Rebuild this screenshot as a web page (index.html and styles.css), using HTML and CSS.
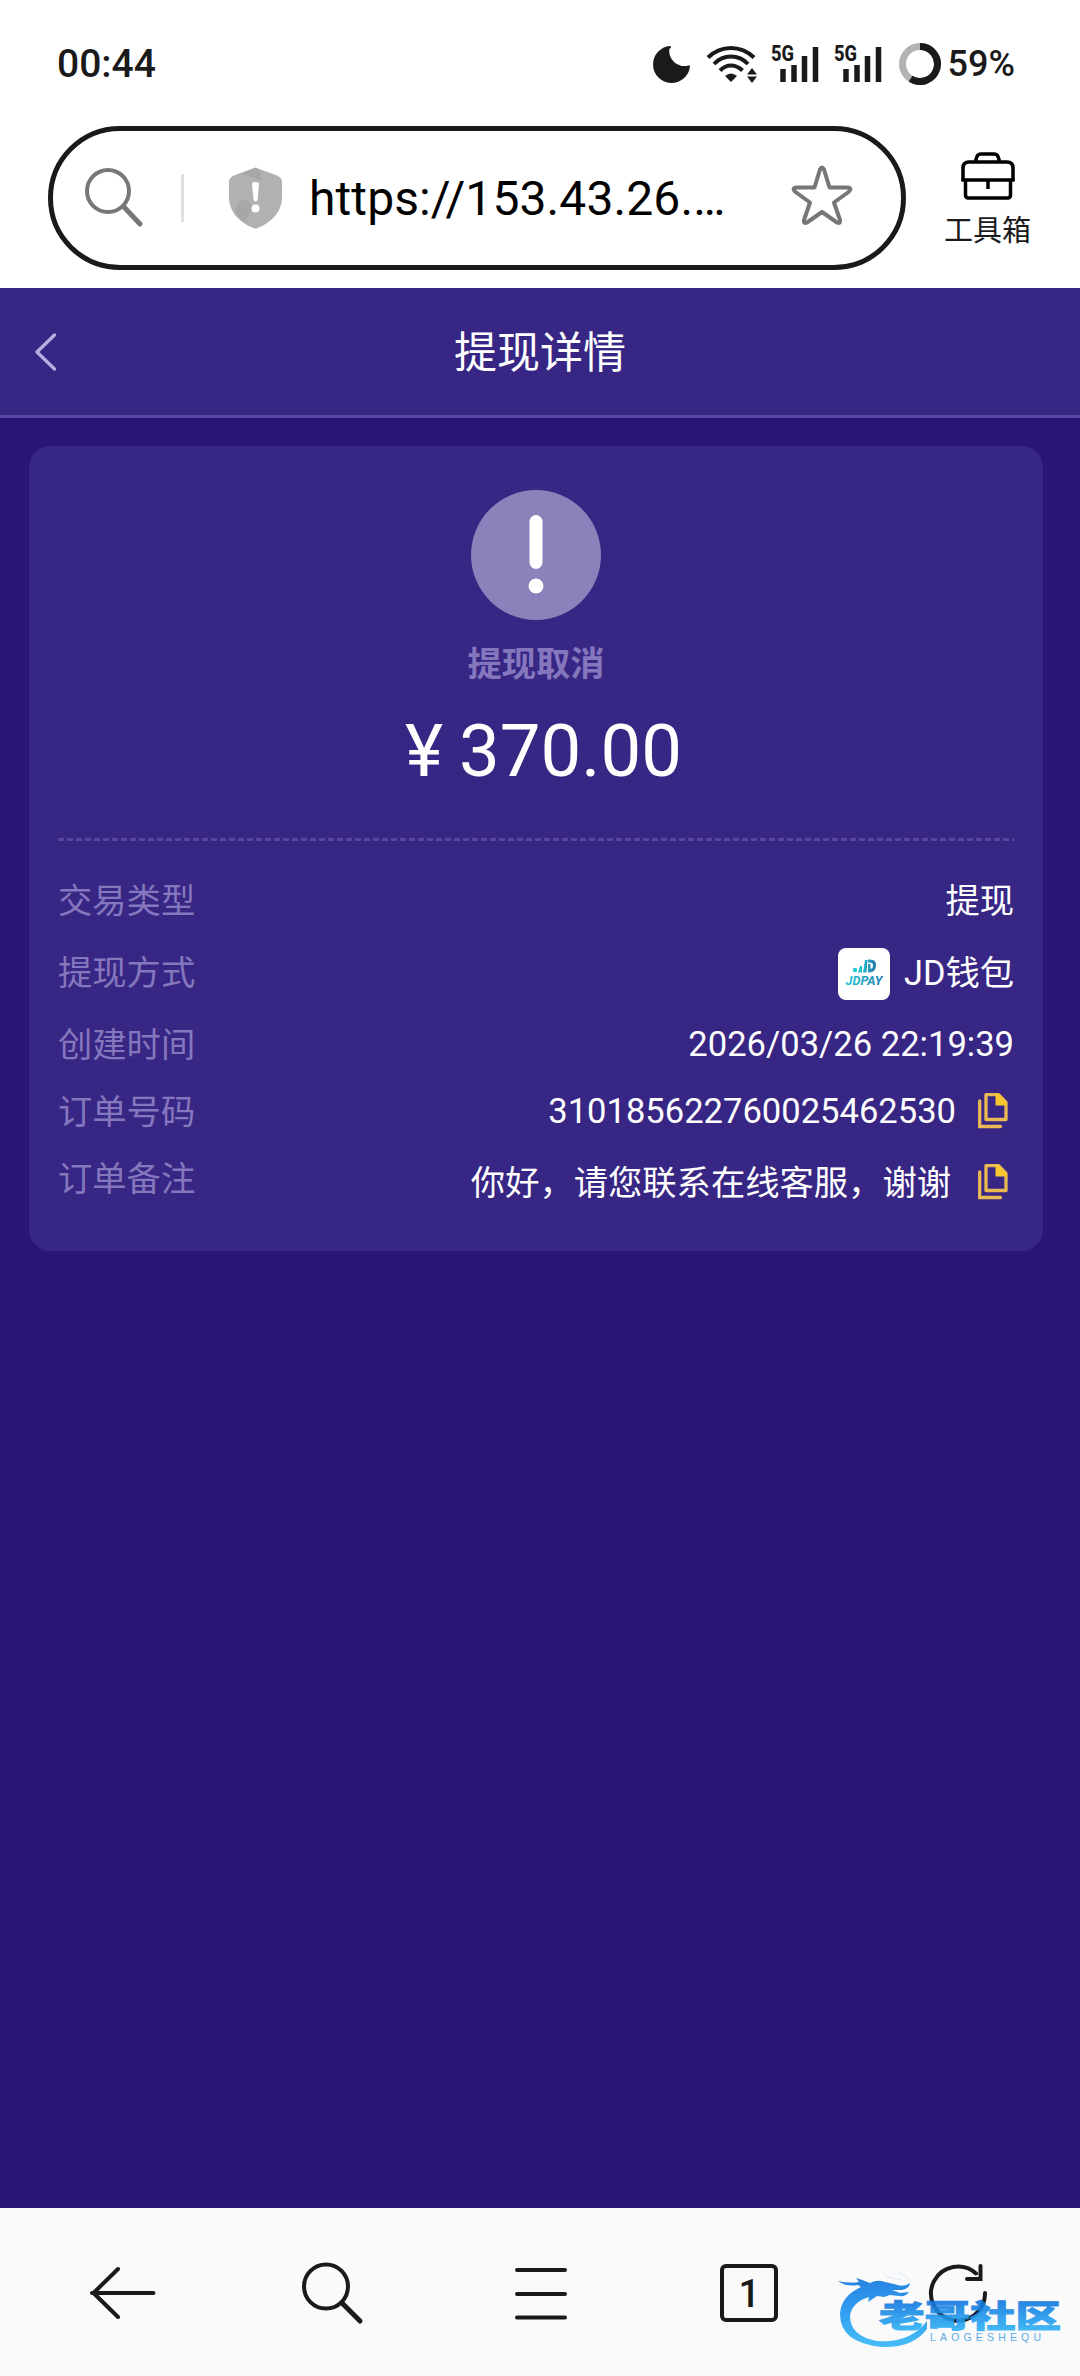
FILE: index.html
```html
<!DOCTYPE html>
<html lang="zh-CN">
<head>
    <meta charset="UTF-8">
    <meta name="viewport" content="width=device-width, initial-scale=1.0">
    <title>提现详情</title>
    <link rel="stylesheet" href="styles.css">
</head>
<body>
<div class="status-bar">
    <div class="clock">00:44</div>
    <div class="status-icons">
        <svg class="moon" width="38" height="38" viewBox="0 0 38 38">
            <path d="M17 1 A18.5 18.5 0 1 0 37 21 A1 1 0 0 0 35.500 20.500 A15 15 0 0 1 16.500 3.500 A1.200 1.200 0 0 0 17 1Z" fill="#1a1a1a"/>
        </svg>
        <svg class="wifi" width="52" height="38" viewBox="0 0 52 38">
            <g fill="none" stroke="#1a1a1a" stroke-width="4">
                <path d="M2 12.500 Q12 3 25 3 Q38 3 48 12.500"/>
                <path d="M8 19 Q15 11.500 25 11.500 Q35 11.500 42 19"/>
                <path d="M14 25.500 Q19 20.500 25 20.500 Q31 20.500 36.500 25.500"/>
            </g>
            <path d="M19 31 Q25 26 31 31 L25 37Z" fill="#1a1a1a"/>
            <path d="M41 29.500 L46 23 L51 29.500Z M41 31.500 L46 38 L51 31.500Z" fill="#1a1a1a"/>
        </svg>
        <svg class="signal" width="50" height="56" viewBox="0 -8 50 56">
            <text class="net-type" x="1" y="17" textLength="23" lengthAdjust="spacingAndGlyphs">5G</text>
            <path d="M13 25V38M24 21V38M34.500 12V38M45.500 3V38" stroke="#1a1a1a" stroke-width="5.500"/>
        </svg>
        <svg class="signal" width="50" height="56" viewBox="0 -8 50 56">
            <text class="net-type" x="1" y="17" textLength="23" lengthAdjust="spacingAndGlyphs">5G</text>
            <path d="M13 25V38M24 21V38M34.500 12V38M45.500 3V38" stroke="#1a1a1a" stroke-width="5.500"/>
        </svg>
        <svg class="battery" width="42" height="42" viewBox="0 0 42 42">
            <circle cx="21" cy="21" r="17.500" fill="none" stroke="#b2b2b2" stroke-width="7"/>
            <path d="M21 3.500 A17.500 17.500 0 1 1 11.600 35.800" fill="none" stroke="#1a1a1a" stroke-width="7"/>
        </svg>
        <span class="battery-text">59%</span>
    </div>
</div>

<div class="browser-bar">
    <div class="address">
        <svg class="search-icon" width="60" height="62" viewBox="0 0 60 62">
            <circle cx="24" cy="24" r="21" fill="none" stroke="#777" stroke-width="4"/>
            <path d="M39.500 39.500 L56 57" stroke="#777" stroke-width="5" stroke-linecap="round"/>
        </svg>
        <div class="divider"></div>
        <svg class="shield" width="55" height="62" viewBox="0 0 55 62">
            <path d="M27.500 0.500 L49 8.500 Q54 10.500 54 15 V30 C54 46 42 56 29.500 61 Q27.500 62 25.500 61 C13 56 1 46 1 30 V15 Q1 10.500 6 8.500Z" fill="#b1b1b1"/>
            <path d="M27.500 1 L11 7 Q22 8 33 14 Q34 5 27.500 1Z" fill="#a7a7a7"/>
            <path d="M7 44 Q8 34 18 32 Q21 34 24 40 L17 55 Q10 50 7 44Z" fill="#a7a7a7"/>
            <path d="M24 17 Q24 15 27.500 15 Q31 15 31 17 L29.500 33 Q27.500 36 25.500 33Z" fill="#fff"/>
            <circle cx="27.500" cy="41.500" r="4" fill="#fff"/>
        </svg>
        <div class="url">https://153.43.26.…</div>
        <svg class="star" width="62" height="60" viewBox="0 0 62 60">
            <path d="M29 4.500 Q31 0.500 33 4.500 L38.500 22.500 H57 Q61.500 23.500 57.500 27 L43 37.500 L49 55 Q49.500 59 46 57.500 L31 47 L16 57.500 Q12.500 59 13 55 L19 37.500 L4.500 27 Q0.500 23.500 5 22.500 H23.500Z" fill="none" stroke="#777" stroke-width="4" stroke-linejoin="round"/>
        </svg>
    </div>
    <div class="toolbox">
        <svg width="54" height="48" viewBox="0 0 54 48" fill="none" stroke="#000" stroke-width="3.500">
            <path d="M14.500 9 L16 4.500 Q17 2 20 2 H33 Q36 2 37 4.500 L38.500 9"/>
            <path d="M2 29 V16 Q2 10 8 10 H46 Q52 10 52 16 V29"/>
            <path d="M0.500 28 H53.500 M27 28 V37"/>
            <path d="M4.500 29 V43 Q4.500 46 7.500 46 H46.500 Q49.500 46 49.500 43 V29"/>
        </svg>
        <span>工具箱</span>
    </div>
</div>

<div class="page">
    <div class="page-header">
        <svg class="back" width="24" height="38" viewBox="0 0 24 38">
            <path d="M20.500 2 L3 19 L20.500 36" fill="none" stroke="#b9aee4" stroke-width="3.300" stroke-linecap="round" stroke-linejoin="round"/>
        </svg>
        <div class="title">提现详情</div>
    </div>

    <div class="card">
        <div class="result">
            <svg width="130" height="130" viewBox="0 0 130 130">
                <circle cx="65" cy="65" r="65" fill="#8c81ba"/>
                <rect x="58.500" y="25" width="13" height="54" rx="6.500" fill="#fff"/>
                <circle cx="65" cy="96" r="7.500" fill="#fff"/>
            </svg>
            <div class="result-text">提现取消</div>
            <div class="amount">¥ 370.00</div>
        </div>
        <div class="dashed"></div>
        <div class="row">
            <div class="label">交易类型</div>
            <div class="value"><span class="cn">提现</span></div>
        </div>
        <div class="row">
            <div class="label">提现方式</div>
            <div class="value">
                <svg class="jdpay" width="52" height="52" viewBox="0 0 52 52">
                    <defs>
                        <linearGradient id="jd" x1="0" y1="0" x2="1" y2="0">
                            <stop offset="0" stop-color="#25c8d4"/>
                            <stop offset="1" stop-color="#2679ae"/>
                        </linearGradient>
                    </defs>
                    <rect width="52" height="52" rx="8" fill="#fff"/>
                    <circle cx="17" cy="22" r="2.200" fill="#25c8d4"/>
                    <path d="M20 24.500 L22 18 H24 V24.500Z M25 24.500 L27 12 H29.500 L28.500 24.500Z M30 24.500 V16 H32.500 V21 Q35 20.500 35 17.500 Q35 14.500 31.500 14.500 H30 V11.500 H32 Q38.500 11.500 38 17.500 Q37.500 24.500 31 24.500Z" fill="url(#jd)"/>
                    <text class="jdpay-text" x="7.500" y="37" textLength="37" lengthAdjust="spacingAndGlyphs" fill="url(#jd)">JDPAY</text>
                </svg>
                <span class="cn">JD钱包</span>
            </div>
        </div>
        <div class="row">
            <div class="label">创建时间</div>
            <div class="value number">2026/03/26 22:19:39</div>
        </div>
        <div class="row row-short">
            <div class="label">订单号码</div>
            <div class="value number">
                <span>310185622760025462530</span>
                <svg class="copy" width="30" height="36" viewBox="0 0 30 36">
                    <path d="M1.700 8 V33.500 H22.500" fill="none" stroke="#e9b954" stroke-width="3.300" stroke-linecap="round"/>
                    <path d="M8 1.700 H20.500 L28 9.500 V26.500 H8Z" fill="none" stroke="#e9b954" stroke-width="3.300" stroke-linejoin="round"/>
                    <path d="M17.500 1 H21 L29 9.500 V12.500 H17.500Z" fill="#f8c630"/>
                </svg>
            </div>
        </div>
        <div class="row">
            <div class="label">订单备注</div>
            <div class="value remark">
                <span class="cn">你好，请您联系在线客服，谢谢</span>
                <svg class="copy" width="30" height="36" viewBox="0 0 30 36">
                    <path d="M1.700 8 V33.500 H22.500" fill="none" stroke="#e9b954" stroke-width="3.300" stroke-linecap="round"/>
                    <path d="M8 1.700 H20.500 L28 9.500 V26.500 H8Z" fill="none" stroke="#e9b954" stroke-width="3.300" stroke-linejoin="round"/>
                    <path d="M17.500 1 H21 L29 9.500 V12.500 H17.500Z" fill="#f8c630"/>
                </svg>
            </div>
        </div>
    </div>
</div>

<div class="nav">
    <svg width="70" height="70" viewBox="0 0 70 70" fill="none" stroke="#1a1a1a" stroke-width="4" stroke-linecap="round" stroke-linejoin="round">
        <path d="M65.500 35 H4 M30 11 L5.500 35 L30 59"/>
    </svg>
    <svg width="70" height="70" viewBox="0 0 70 70" fill="none" stroke="#1a1a1a" stroke-linecap="round">
        <circle cx="29" cy="28.500" r="22" stroke-width="4"/>
        <path d="M45 45 L63 63" stroke-width="5"/>
    </svg>
    <svg width="70" height="70" viewBox="0 0 70 70" stroke="#1a1a1a" stroke-width="4" stroke-linecap="round">
        <path d="M11 12 H59 M11 36 H59 M11 59.500 H59"/>
    </svg>
    <div class="tabs">1</div>
    <svg width="70" height="70" viewBox="0 0 70 70" fill="none" stroke="#1a1a1a" stroke-width="4" stroke-linecap="round">
        <path d="M62 35 A27 27 0 1 1 53 15.500"/>
        <path d="M57.500 8 V21 H44"/>
    </svg>

    <!-- site watermark over the corner -->
    <svg class="watermark" width="240" height="90" viewBox="0 0 240 90">
        <defs>
            <linearGradient id="wm" gradientUnits="userSpaceOnUse" x1="0" y1="10" x2="0" y2="82">
                <stop offset="0" stop-color="#1173dc"/>
                <stop offset="0.450" stop-color="#1890ee"/>
                <stop offset="1" stop-color="#35b6f7"/>
            </linearGradient>
            <linearGradient id="wmt" gradientUnits="userSpaceOnUse" x1="0" y1="37" x2="0" y2="67">
                <stop offset="0" stop-color="#1177df"/>
                <stop offset="1" stop-color="#2db2f6"/>
            </linearGradient>
        </defs>
        <path d="M8 17 Q18 19.500 29 18 L26 14 Q33 16 40 19 Q47 15 55 18 L64 20 Q74 24 80 19 Q80 24 72 26 L62 26 L70 29 L79 28 Q76 33 69 32 L60 31 L54 33 L47 32 L38 38 L39 33 Q22 38 20 52 Q20 72 47 77 Q79 80 97 57 L97 65 Q83 84 52 83 Q10 79 10 50 Q11 32 31 23 L28 21 Q16 23 8 17Z" fill="url(#wm)"/>
        <path d="M53 9 Q60 16 71 15 M68 8 Q77 11 80 16" fill="none" stroke="#cfe2f8" stroke-width="0.800"/>
        <text class="wm-name" x="49" y="62.500" textLength="182" lengthAdjust="spacingAndGlyphs" fill="url(#wmt)" stroke="url(#wmt)">老哥社区</text>
        <text class="wm-sub" x="100" y="77" textLength="111">LAOGESHEQU</text>
    </svg>
</div>
</body>
</html>
```

FILE: styles.css
```css
* {
    box-sizing: border-box;
}

body {
    margin: 0;
    width: 1080px;
    height: 2376px;
    display: flex;
    flex-direction: column;
    overflow: hidden;
    background-color: #fff;
    font-family: Roboto, "Noto Sans CJK SC", sans-serif;
}

svg {
    display: block;
    flex-shrink: 0;
}

.status-bar {
    height: 126px;
    padding: 1px 65px 0 57px;
    display: flex;
    justify-content: space-between;
    align-items: center;
    color: #1a1a1a;
}

.clock {
    font-size: 39px;
    font-weight: 500;
}

.status-icons {
    display: flex;
    align-items: center;
}

.moon {
    margin-right: 15px;
}

.wifi {
    margin-right: 12px;
}

.signal {
    margin-right: 13px;
}

.signal + .battery {
    margin-left: 3px;
}

.net-type {
    font-size: 22px;
    font-weight: 800;
    fill: #1a1a1a;
}

.battery {
    margin-right: 7px;
}

.battery-text {
    font-size: 36px;
    font-weight: 500;
}

.browser-bar {
    height: 162px;
    padding-left: 48px;
    display: flex;
    align-items: flex-start;
}

.address {
    width: 858px;
    height: 144px;
    padding-left: 31px;
    display: flex;
    align-items: center;
    border: 5px solid #1a1a1a;
    border-radius: 72px;
}

.divider {
    width: 3px;
    height: 48px;
    margin: 0 44px 0 37px;
    background-color: #e0e0e0;
}

.url {
    width: 482px;
    margin-left: 26px;
    font-size: 48px;
    letter-spacing: 0.100px;
    white-space: nowrap;
    color: #000;
}

.star {
    margin-top: -6px;
}

.toolbox {
    width: 87px;
    margin-left: 38px;
    padding-top: 26px;
    display: flex;
    flex-direction: column;
    align-items: center;
    font-size: 29px;
    line-height: 40px;
    color: #1a1a1a;
}

.toolbox span {
    margin-top: 11px;
}

.page {
    height: 1920px;
    background-color: #281576;
}

.page-header {
    height: 130px;
    padding-left: 34px;
    display: flex;
    align-items: center;
    background-color: #382684;
    border-bottom: 3px solid #5846a0;
}

.title {
    flex: 1;
    padding: 0 58px 5px 0;
    text-align: center;
    font-size: 43px;
    color: #fff;
}

.card {
    width: 1014px;
    height: 805px;
    margin: 28px 0 0 29px;
    padding: 44px 29px 0;
    background-color: #382684;
    border-radius: 21px;
}

.result {
    height: 348px;
    display: flex;
    flex-direction: column;
    align-items: center;
}

.result-text {
    margin-top: 19px;
    font-size: 34.300px;
    font-weight: bold;
    line-height: 50px;
    color: #8577bd;
}

.amount {
    margin: 21px 0 0 15px;
    font-size: 72.500px;
    line-height: 84px;
    word-spacing: -2px;
    color: #fff;
}

.dashed {
    height: 3px;
    margin-bottom: 23px;
    background: repeating-linear-gradient(to right, #5846a0 0 6px, transparent 6px 9px);
}

.row {
    height: 72px;
    display: flex;
    justify-content: space-between;
    align-items: center;
    font-size: 34.300px;
}

.row-short {
    height: 62px;
}

.label,
.cn {
    padding-bottom: 4px;
}

.label {
    color: #8577bd;
}

.value {
    display: flex;
    align-items: center;
    color: #fff;
}

.number {
    font-size: 34.560px;
}

.jdpay {
    margin: 3px 14px 0 0;
}

.jdpay-text {
    font-size: 12px;
    font-weight: 700;
    font-style: italic;
}

.copy {
    margin: 0 6px 0 22px;
}

.remark {
    padding-top: 8px;
}

.remark .copy {
    margin-left: 27px;
}

.nav {
    position: relative;
    height: 168px;
    padding: 1px 87px 0 88px;
    display: flex;
    justify-content: space-between;
    align-items: center;
    background-color: #fafafa;
}

.tabs {
    width: 58px;
    height: 58px;
    margin: 0 6px;
    border: 4px solid #1a1a1a;
    border-radius: 6px;
    text-align: center;
    font-size: 38px;
    font-weight: 500;
    line-height: 52px;
    color: #1a1a1a;
}

.watermark {
    position: absolute;
    left: 830px;
    top: 56px;
    opacity: 0.900;
}

.wm-name {
    font-family: "Noto Sans CJK SC", sans-serif;
    font-size: 31px;
    font-weight: 900;
    stroke-width: 1px;
}

.wm-sub {
    font-family: "Liberation Sans", sans-serif;
    font-size: 10.500px;
    fill: #4aa3e6;
}
```
